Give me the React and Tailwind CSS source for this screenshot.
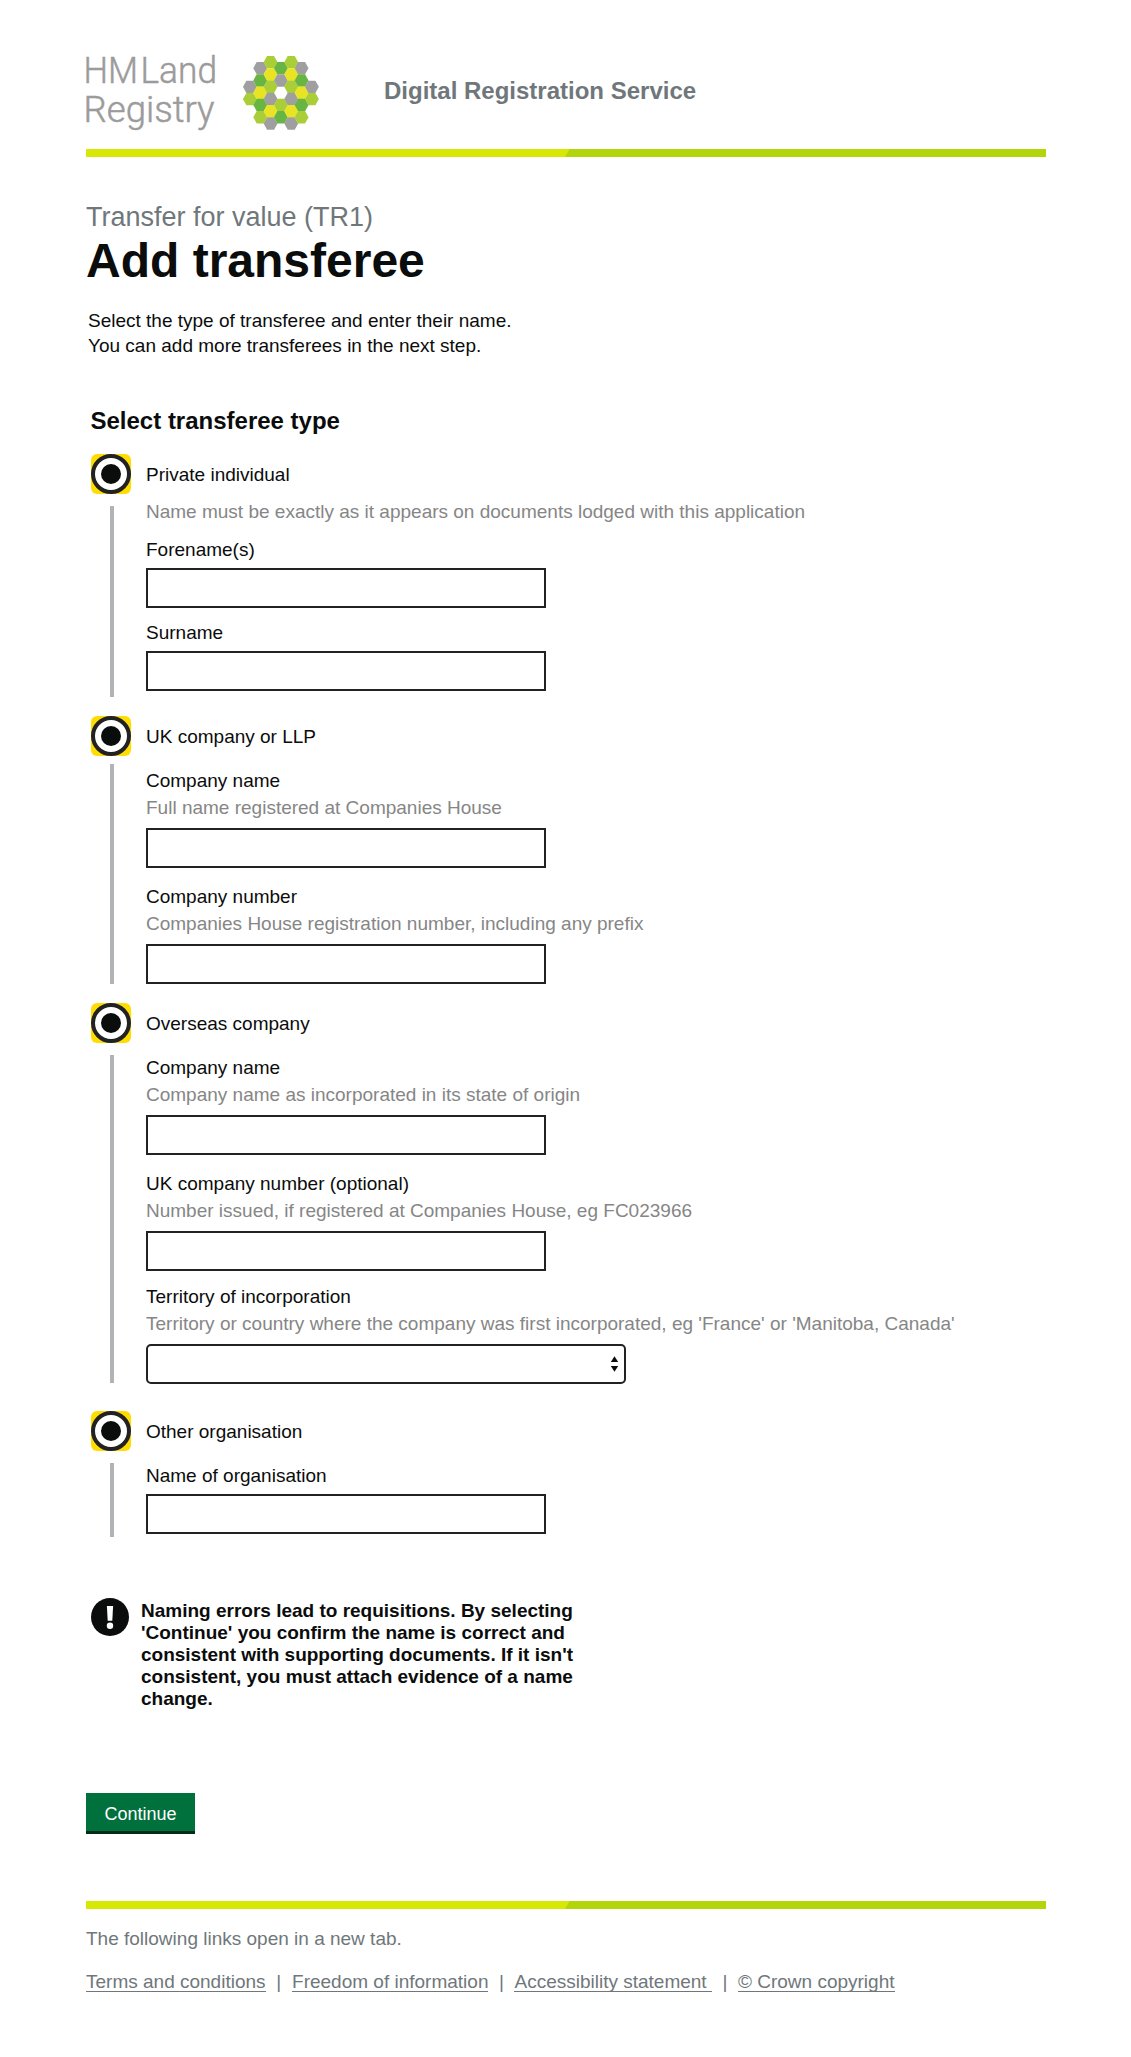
const GREY = "#a09f9f";
const LIME = "#a9ce38";
const GREEN = "#69b543";
const YELLOW = "#e9e423";

// Hexagon columns of the logo: x centre, first y centre, colours from top to bottom.
const COLUMNS = [
  [20.7, 92.5, [GREY, LIME]],
  [51.7, 36.5, [GREY, GREEN, YELLOW, GREEN, LIME]],
  [82.7, 18.5, [LIME, YELLOW, LIME, GREY, YELLOW, GREY]],
  [113.7, 36.5, [GREEN, GREY, null, LIME, GREEN]],
  [144.7, 18.5, [LIME, YELLOW, LIME, GREY, YELLOW, GREY]],
  [175.7, 36.5, [GREY, GREEN, YELLOW, GREEN, LIME]],
  [206.7, 92.5, [GREY, LIME]],
];

function hexagon(cx, cy) {
  return [
    [cx - 20.9, cy],
    [cx - 10.5, cy - 18.6],
    [cx + 10.5, cy - 18.6],
    [cx + 20.9, cy],
    [cx + 10.5, cy + 18.6],
    [cx - 10.5, cy + 18.6],
  ]
    .map((p) => p.join(","))
    .join(" ");
}

function Logo() {
  return (
    <div className="flex h-[76px] w-[233px] shrink-0">
      <svg
        width="167"
        height="96"
        viewBox="-10 -12 167 96"
        className="-mt-3 -ml-2.5 shrink-0"
        fill="#9c9b9b"
        stroke="#9c9b9b"
        strokeWidth="0.5"
      >
        <g fontFamily="Roboto, sans-serif" fontWeight="300" fontSize="37">
          <text x="-2.5" y="27" textLength="54.5" lengthAdjust="spacingAndGlyphs">HM</text>
          <text x="54.5" y="27" textLength="76.5" lengthAdjust="spacingAndGlyphs">Land</text>
          <text x="-2.5" y="66" textLength="131" lengthAdjust="spacingAndGlyphs">Registry</text>
        </g>
      </svg>
      <svg width="76" height="75" viewBox="0 0 228 225" className="shrink-0">
        {COLUMNS.map(([x, y, colours]) =>
          colours.map(
            (c, i) => c && <polygon key={`${x}-${i}`} points={hexagon(x, y + i * 36.8)} fill={c} />
          )
        )}
      </svg>
    </div>
  );
}

function Rule() {
  return (
    <svg width="960" height="8" viewBox="0 0 960 8" className="block">
      <rect width="960" height="8" fill="#d7e805" />
      <path d="M479 8 L483.5 0 H960 V8 Z" fill="#b2d50b" />
    </svg>
  );
}

function Radio() {
  return (
    <span className="flex size-10 shrink-0 rounded-[6px] bg-[#ffdd00]">
      <span className="flex size-10 items-center justify-center rounded-full border-4 border-[#222222] bg-white">
        <span className="size-5 rounded-full bg-[#0b0c0c]" />
      </span>
    </span>
  );
}

function Option({ label, className, bar, children }) {
  return (
    <section className={className}>
      <label className="flex items-start">
        <Radio />
        <span className="mt-2 ml-[15px]">{label}</span>
      </label>
      <div className="flex items-start">
        <div className={`ml-[19px] w-1 shrink-0 bg-[#b1b4b6] ${bar}`} />
        <div className="ml-8 flex flex-col whitespace-nowrap">{children}</div>
      </div>
    </section>
  );
}

function Hint({ children, className = "mt-0.5" }) {
  return <p className={`text-[#868686] ${className}`}>{children}</p>;
}

function TextBox({ label, className = "mt-2" }) {
  return (
    <input
      aria-label={label}
      className={`block h-10 w-[400px] border-2 border-[#222222] bg-white px-2 ${className}`}
    />
  );
}

function FooterLink({ children, className = "" }) {
  return (
    <a href="#" className={`h-[23px] border-b border-[#6f777b] whitespace-pre ${className}`}>
      {children}
    </a>
  );
}

export default function App() {
  return (
    <div className="min-h-[2057px] w-[1131px] bg-white pl-[86px] font-['Liberation_Sans',Arial,sans-serif] text-[19px] leading-[25px] text-[#0b0c0c]">
      <header className="flex h-[149px] items-start pt-14">
        <Logo />
        <p className="mt-5 ml-[65px] text-2xl leading-[30px] font-bold text-[#6f777b]">
          Digital Registration Service
        </p>
      </header>
      <Rule />

      <main>
        <p className="mt-11 text-[27px] leading-[32px] text-[#6f777b]">Transfer for value (TR1)</p>
        <h1 className="mt-[3px] text-[48px] leading-[50px] font-bold">Add transferee</h1>
        <div className="mt-[22px] ml-0.5">
          <p>Select the type of transferee and enter their name.</p>
          <p>You can add more transferees in the next step.</p>
        </div>

        <form className="ml-[5px]">
          <h2 className="-ml-[0.5px] mt-12 text-2xl leading-[30px] font-bold">Select transferee type</h2>

          <Option label="Private individual" className="mt-[18px]" bar="mt-3 h-[191px]">
            <Hint className="mt-[5px]">
              Name must be exactly as it appears on documents lodged with this application
            </Hint>
            <p className="mt-[13px]">Forename(s)</p>
            <TextBox label="Forename(s)" className="mt-1.5" />
            <p className="mt-3">Surname</p>
            <TextBox label="Surname" className="mt-1.5" />
          </Option>

          <Option label="UK company or LLP" className="mt-[19px]" bar="mt-2 h-[220px]">
            <p className="mt-3">Company name</p>
            <Hint>Full name registered at Companies House</Hint>
            <TextBox label="Company name" />
            <p className="mt-4">Company number</p>
            <Hint>Companies House registration number, including any prefix</Hint>
            <TextBox label="Company number" />
          </Option>

          <Option label="Overseas company" className="mt-[19px]" bar="mt-3 h-[328px]">
            <p className="mt-3">Company name</p>
            <Hint>Company name as incorporated in its state of origin</Hint>
            <TextBox label="Company name" />
            <p className="mt-4">UK company number (optional)</p>
            <Hint>Number issued, if registered at Companies House, eg FC023966</Hint>
            <TextBox label="UK company number" />
            <p className="mt-[13px]">Territory of incorporation</p>
            <Hint>Territory or country where the company was first incorporated, eg 'France' or 'Manitoba, Canada'</Hint>
            <button
              type="button"
              aria-label="Territory of incorporation"
              className="mt-2 flex h-10 w-[480px] items-center justify-end rounded-[5px] border-2 border-[#222222] bg-white pr-[5px]"
            >
              <svg width="9" height="16" viewBox="0 0 9 16" fill="#0b0c0c">
                <path d="M4.5 0.2 L8.2 6 H0.8 Z M0.8 10 H8.2 L4.5 15.8 Z" />
              </svg>
            </button>
          </Option>

          <Option label="Other organisation" className="mt-[27px]" bar="mt-3 h-[74px]">
            <p className="mt-3">Name of organisation</p>
            <TextBox label="Name of organisation" className="mt-1.5" />
          </Option>

          <div className="mt-[61px] flex items-start">
            <svg width="38" height="38" viewBox="0 0 38 38" className="shrink-0">
              <circle cx="19" cy="19" r="19" fill="#0b0c0c" />
              <path d="M15.9 8 H22.1 L21.3 22.8 H16.7 Z" fill="#fff" />
              <circle cx="19" cy="27.7" r="3.2" fill="#fff" />
            </svg>
            <p className="mt-0.5 ml-3 leading-[22px] font-bold whitespace-nowrap">
              Naming errors lead to requisitions. By selecting
              <br />
              'Continue' you confirm the name is correct and
              <br />
              consistent with supporting documents. If it isn't
              <br />
              consistent, you must attach evidence of a name
              <br />
              change.
            </p>
          </div>
        </form>

        <button
          type="button"
          className="mt-[83px] block h-[41px] w-[109px] border-b-3 border-[#002d18] bg-[#00703c] pt-[5px] text-[18px] text-white"
        >
          Continue
        </button>
      </main>

      <footer className="mt-[67px] text-[#6f777b]">
        <Rule />
        <p className="mt-[17px]">The following links open in a new tab.</p>
        <nav className="mt-[18px] flex">
          <FooterLink>Terms and conditions</FooterLink>
          <span className="w-[26.5px] text-center">|</span>
          <FooterLink>Freedom of information</FooterLink>
          <span className="w-[26px] text-center">|</span>
          <FooterLink>{"Accessibility statement "}</FooterLink>
          <span className="w-[26px] text-center">|</span>
          <FooterLink>© Crown copyright</FooterLink>
        </nav>
      </footer>
    </div>
  );
}
